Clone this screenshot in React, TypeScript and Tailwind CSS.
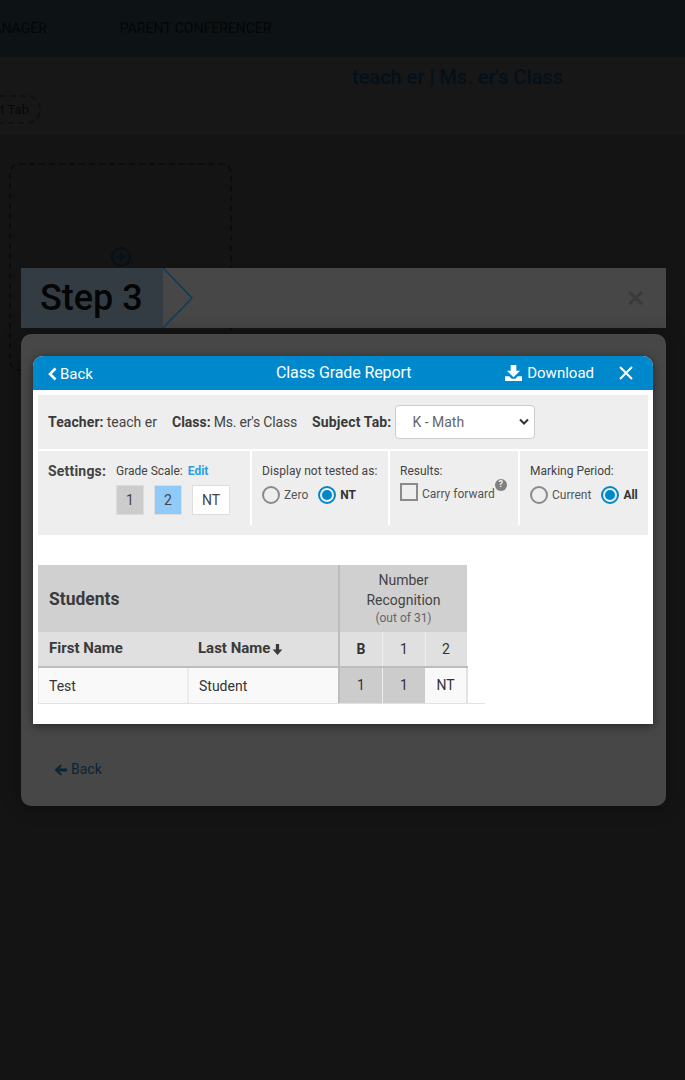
import React from "react";

// Radio button as drawn in the settings panel
const Radio = ({ label, on }: { label: string; on?: boolean }) => (
    <div className="flex items-center">
        <span className={`flex h-[18px] w-[18px] items-center justify-center rounded-full border-2 ${on ? "border-[#0088cc]" : "border-[#8a8a8a]"}`}>
            {on && <span className="h-[10px] w-[10px] rounded-full bg-[#0088cc]" />}
        </span>
        <span className={`ml-[4px] mt-[1px] text-[12px] ${on ? "font-bold text-[#333]" : "text-[#555]"}`}>{label}</span>
    </div>
);

const Background = () => (
    <div className="flex h-full flex-col">
        <div className="flex h-[57px] items-center overflow-hidden bg-[#0d1314] text-[14px] text-[#040607]">
            <span className="ml-[-20px] shrink-0">MANAGER</span>
            <span className="ml-[73px] shrink-0">PARENT CONFERENCER</span>
        </div>
        <div className="flex h-[78px] flex-col bg-[#171717]">
            <div className="mt-[7px] pl-[352px] text-[20px] font-medium leading-[26px] text-[#04101a]">teach er | Ms. er's Class</div>
            <div className="mt-[5px] flex">
                <span className="flex h-[29px] w-[41px] items-center justify-end rounded-r-[15px] border-2 border-l-0 border-dashed border-[#101010] pr-[10px] text-[13px] text-[#070707]">t Tab</span>
            </div>
        </div>
        <div className="flex-1 bg-[#141414] pl-[9px] pt-[28px]">
            <div className="flex h-[208px] w-[223px] justify-center rounded-[10px] border-2 border-dashed border-[#0c0c0c] pl-[1px] pt-[82px]">
                <svg width="20" height="20" viewBox="0 0 20 20" fill="none" stroke="#04101a" strokeWidth="2">
                    <circle cx="10" cy="10" r="9" />
                    <path d="M10 5v10M5 10h10" />
                </svg>
            </div>
        </div>
    </div>
);

const StepBar = () => (
    <div className="flex h-[60px] items-center justify-between bg-[#474747] pr-[23px]">
        <div className="relative flex h-full w-[142px] items-center bg-[#343c43] pl-[19px] text-[36px] font-medium text-[#050505]">
            Step 3
            <svg className="absolute left-[142px] top-0" width="32" height="60" viewBox="0 0 32 60">
                <path d="M0 0L29 30L0 60" fill="none" stroke="#0a3d5c" strokeWidth="1.5" />
            </svg>
        </div>
        <svg width="15" height="14" viewBox="0 0 15 14" stroke="#3a3a3a" strokeWidth="3">
            <path d="M1 1l13 12M14 1L1 13" />
        </svg>
    </div>
);

const ReportHeader = () => (
    <div className="flex h-[34px] items-center rounded-t-[10px] bg-[#0088cc] pl-[15px] pr-[20px] text-white">
        <div className="flex w-[228px] items-center pt-[2px] text-[15px]">
            <svg width="9" height="14" viewBox="0 0 9 14" fill="none" stroke="white" strokeWidth="2.6">
                <path d="M7.5 1.500L2 7l5.500 5.500" />
            </svg>
            <span className="ml-[3px]">Back</span>
        </div>
        <div className="text-[16px] tracking-[-0.1px]">Class Grade Report</div>
        <div className="ml-auto flex items-center">
            <svg width="17" height="16" viewBox="0 0 18 17" fill="white">
                <path d="M6 0h6v6h4l-7 7-7-7h4zM0 12h4.500l2.500 2.500h4l2.500-2.500H18v5H0z" />
            </svg>
            <span className="ml-[5px] text-[15px]">Download</span>
            <svg className="ml-[25px]" width="14" height="14" viewBox="0 0 14 14" stroke="white" strokeWidth="2">
                <path d="M1 1l12 12M13 1L1 13" />
            </svg>
        </div>
    </div>
);

const Settings = () => (
    <div className="mt-[2px] flex h-[84px] bg-[#eeeeee] text-[#444]">
        <div className="flex h-[74px] w-[214px] border-r-2 border-white pl-[10px] pt-[10px]">
            <div className="w-[68px] text-[14px] font-bold leading-[20px] tracking-[0.2px] text-[#444]">Settings:</div>
            <div className="pt-[1px]">
                <div className="text-[12px] leading-[18px]">
                    Grade Scale: <span className="ml-[2px] font-bold text-[#2d9fe0]">Edit</span>
                </div>
                <div className="mt-[5px] flex text-[14px]">
                    <span className="flex h-[30px] w-[28px] items-center justify-center border border-[#dddddd] bg-[#cccccc]">1</span>
                    <span className="ml-[10px] flex h-[30px] w-[28px] items-center justify-center border border-[#dddddd] bg-[#90caf9]">2</span>
                    <span className="ml-[10px] flex h-[30px] w-[38px] items-center justify-center border border-[#dddddd] bg-white">NT</span>
                </div>
            </div>
        </div>
        <div className="h-[74px] w-[138px] border-r-2 border-white pl-[10px] pt-[11px]">
            <div className="text-[12px] leading-[18px] tracking-[0.05px]">Display not tested as:</div>
            <div className="mt-[5px] flex gap-[10px]">
                <Radio label="Zero" />
                <Radio label="NT" on />
            </div>
        </div>
        <div className="h-[74px] w-[130px] border-r-2 border-white pl-[10px] pt-[11px]">
            <div className="text-[12px] leading-[18px]">Results:</div>
            <div className="mt-[3px] flex h-[18px] items-center">
                <span className="h-[18px] w-[18px] border-2 border-[#8a8a8a]" />
                <span className="ml-[4px] mt-[4px] text-[12px] text-[#555]">Carry forward</span>
                <span className="relative top-[-7px] flex h-[12px] w-[12px] items-center justify-center rounded-full bg-[#808080] text-[9px] font-bold text-[#eeeeee]">?</span>
            </div>
        </div>
        <div className="h-[74px] w-[128px] pl-[10px] pt-[11px]">
            <div className="text-[12px] leading-[18px]">Marking Period:</div>
            <div className="mt-[5px] flex gap-[10px]">
                <Radio label="Current" />
                <Radio label="All" on />
            </div>
        </div>
    </div>
);

const GradeTable = () => (
    <div className="ml-[5px] mt-[30px] w-[447px] text-[14px] text-[#333]">
        <div className="flex h-[67px] w-[429px] bg-[#d0d0d0]">
            <div className="flex w-[300px] items-center pl-[11px] pt-[2px] text-[17.5px] font-bold text-[#3a3a3a]">Students</div>
            <div className="w-[129px] border-l-2 border-[#bdbdbd] pt-[5px] text-center leading-[20px] text-[#444]">
                Number
                <br />
                Recognition
                <div className="text-[12px] leading-[16px] text-[#666]">(out of 31)</div>
            </div>
        </div>
        <div className="flex h-[36px] w-[430px] border-b-2 border-[#bdbdbd] bg-[#e0e0e0]">
            <div className="flex w-[149px] items-center pb-[1px] pl-[11px] text-[15px] font-bold text-[#3a3a3a]">First Name</div>
            <div className="flex w-[151px] items-center pb-[1px] pl-[11px] text-[15px] font-bold text-[#3a3a3a]">
                Last Name
                <svg className="ml-[1px] mt-[2px]" width="13" height="13" viewBox="0 0 12 12" fill="#3a3a3a">
                    <path d="M4.500 1h3v5h3L6 11 1.500 6h3z" />
                </svg>
            </div>
            <div className="flex w-[44px] items-center justify-center border-l-2 border-[#bdbdbd] font-bold">B</div>
            <div className="flex w-[43px] items-center justify-center border-l border-[#eeeeee]">1</div>
            <div className="flex w-[43px] items-center justify-center border-l border-r border-l-[#eeeeee] border-r-white pr-[1px]">2</div>
        </div>
        <div className="flex h-[36px] border-b border-[#e2e2e2]">
            <div className="flex w-[151px] items-center border-l border-r-2 border-[#eeeaea] bg-[#f9f9f9] pl-[10px] pt-[1px]">Test</div>
            <div className="flex w-[149px] items-center bg-[#f9f9f9] pl-[10px] pt-[1px]">Student</div>
            <div className="flex w-[44px] items-center justify-center border-l-2 border-[#bdbdbd] bg-[#cccccc]">1</div>
            <div className="flex w-[43px] items-center justify-center border-l border-[#eeeeee] bg-[#cccccc]">1</div>
            <div className="flex w-[43px] items-center justify-center border-r-2 border-[#e2e2e2] bg-[#f9f9f9]">NT</div>
        </div>
    </div>
);

const App = () => {
    return (
        <div className="relative h-[1080px] w-[685px] overflow-hidden bg-[#141414]" style={{ fontFamily: "Roboto, sans-serif" }}>
            <Background />

            {/* Modal over the dimmed page */}
            <div className="absolute left-[21px] top-[268px] w-[645px]">
                <StepBar />
                <div className="mt-[6px] h-[472px] rounded-[10px] bg-[#474747] pl-[12px] pr-[13px] pt-[22px] shadow-[0_0_20px_rgba(0,0,0,0.3)]">
                    <div className="h-[368px] rounded-t-[10px] bg-white shadow-[0_2px_10px_rgba(0,0,0,0.5)]">
                        <ReportHeader />
                        <div className="px-[5px] pt-[5px]">
                            <div className="flex h-[54px] items-center bg-[#eeeeee] pl-[10px] text-[14px] text-[#444]">
                                <b className="tracking-[0.1px] text-[#3a3a3a]">Teacher:</b>
                                <span className="ml-[3px]">teach er</span>
                                <b className="ml-[15px] text-[#3a3a3a]">Class:</b>
                                <span className="ml-[3px] tracking-[-0.2px]">Ms. er's Class</span>
                                <b className="ml-[15px] tracking-[0.15px] text-[#3a3a3a]">Subject Tab:</b>
                                <div className="ml-[4px] flex h-[34px] w-[140px] items-center justify-between rounded-[4px] border border-[#cccccc] bg-white pl-[16px] pr-[4px] text-[#666]">
                                    K - Math
                                    <svg width="12" height="8" viewBox="0 0 12 8" fill="none" stroke="#333" strokeWidth="2">
                                        <path d="M2 1.500l4 4 4-4" />
                                    </svg>
                                </div>
                            </div>
                            <Settings />
                        </div>
                        <GradeTable />
                    </div>
                    <div className="mt-[35px] flex items-center pl-[21px] text-[14px] text-[#0b2436]">
                        <svg width="13" height="12" viewBox="0 0 13 12" fill="#0b2436">
                            <path d="M6.500 0.500L0.500 6l6 5.500 1.500-1.500L5 7.500h8v-3H5L8 2z" />
                        </svg>
                        <span className="ml-[4px]">Back</span>
                    </div>
                </div>
            </div>
        </div>
    );
};

export default App;
